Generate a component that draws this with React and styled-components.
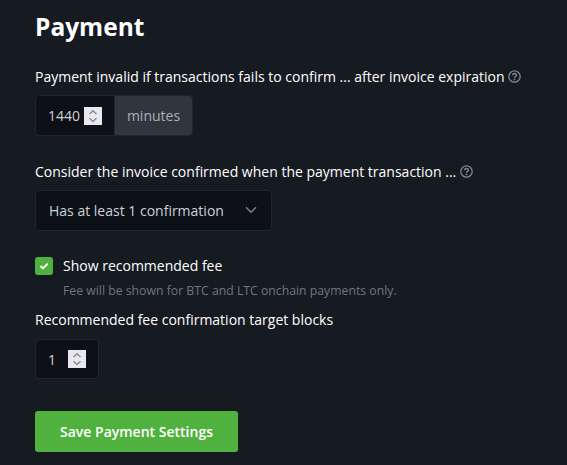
import React from "react";
import styled, { createGlobalStyle } from "styled-components";

const GlobalStyle = createGlobalStyle`
  *, *::before, *::after { box-sizing: border-box; }
  body {
    margin: 0;
    background: #161b22;
    color: #fff;
    font: 400 14px/21px "Open Sans", "Noto Sans", sans-serif;
  }
`;

const Page = styled.form`
  display: flex;
  flex-direction: column;
  align-items: flex-start;
  height: 465px;
  padding: 9px 35px 0;
  overflow: hidden;
  white-space: nowrap;
`;

const Title = styled.h3`
  margin: 0 0 21px;
  font-size: 24.5px;
  line-height: 36px;
  font-weight: 700;
`;

const LabelRow = styled.div`
  display: flex;
  align-items: center;
  height: 20px;
  margin-top: ${(p) => p.$top || 0}px;
  gap: 3.5px;
`;

const Label = styled.label`
  font-size: 14px;
`;

const HelpIcon = styled.svg`
  width: 13px;
  height: 13px;
  flex: none;
  fill: none;
  stroke: #7d848d;
`;

const InputGroup = styled.div`
  display: flex;
  height: ${(p) => p.$height}px;
  width: ${(p) => p.$width}px;
  margin-top: ${(p) => p.$top}px;
  border: 1px solid #21262d;
  border-radius: 4px;
  background: #0d1117;
  overflow: hidden;
`;

const NumberField = styled.div`
  display: flex;
  flex: 1;
  align-items: center;
  justify-content: space-between;
  padding: 0 12px;
  color: #c9d1d9;
`;

const Spinner = styled.svg`
  width: 18px;
  height: 18px;
  background: #e9e9ed;
  fill: none;
  stroke: #8b8b94;
  stroke-width: 1.5;
`;

const Unit = styled.span`
  display: flex;
  align-items: center;
  justify-content: center;
  width: 78px;
  border-left: 1px solid #21262d;
  background: #30363d;
  color: #a8b0b9;
`;

const Select = styled.button`
  display: flex;
  align-items: center;
  justify-content: space-between;
  width: 237px;
  height: 41px;
  margin: 9px 0 25px;
  padding: 0 14px 0 13px;
  border: 1px solid #21262d;
  border-radius: 4px;
  background: #0d1117;
  color: #c9d1d9;
  font: inherit;
`;

const Chevron = styled.svg`
  width: 12px;
  height: 8px;
  margin-bottom: 1px;
  fill: none;
  stroke: #7d848e;
  stroke-width: 1.4;
`;

const CheckRow = styled.div`
  display: flex;
  align-items: center;
  gap: 10px;
  height: 20px;

  label {
    padding-bottom: 2px;
  }
`;

const Checkbox = styled.span`
  display: flex;
  width: 18px;
  height: 18px;
  border-radius: 3px;
  background: #51b13e;
`;

const CheckMark = styled.svg`
  width: 18px;
  height: 18px;
  fill: none;
  stroke: #fff;
  stroke-width: 2;
`;

const Hint = styled.p`
  margin: 5px 0 8px 28px;
  color: #6e7681;
  font-size: 12.25px;
  line-height: 20px;
`;

const SaveButton = styled.button`
  width: 203px;
  height: 41px;
  margin-top: 32px;
  padding: 0;
  border: 0;
  border-radius: 3px;
  background: #51b13e;
  color: #fff;
  font: inherit;
  font-weight: 600;
`;

function Help() {
  return (
    <HelpIcon viewBox="0 0 13 13">
      <circle cx="6.5" cy="6.5" r="5.7" strokeWidth="1.3" />
      <path d="M4.6 5.2C4.6 2.8 8.4 2.9 8.4 5C8.4 6.4 6.5 6.2 6.5 7.8" strokeWidth="1.5" />
      <path d="M6.5 8.7V10.2" strokeWidth="1.6" />
    </HelpIcon>
  );
}

function Stepper() {
  return (
    <Spinner viewBox="0 0 18 18">
      <path d="M5.5 7L9 3.7L12.5 7M5.5 11.2L9 14.5L12.5 11.2" />
    </Spinner>
  );
}

export default function App() {
  return (
    <>
      <GlobalStyle />
      <Page>
        <Title>Payment</Title>
        <LabelRow>
          <Label>Payment invalid if transactions fails to confirm ... after invoice expiration</Label>
          <Help />
        </LabelRow>
        <InputGroup $width={158} $height={41} $top={9}>
          <NumberField>1440<Stepper /></NumberField>
          <Unit>minutes</Unit>
        </InputGroup>
        <LabelRow $top={25}>
          <Label>Consider the invoice confirmed when the payment transaction ...</Label>
          <Help />
        </LabelRow>
        <Select type="button">
          Has at least 1 confirmation
          <Chevron viewBox="0 0 12 8"><path d="M1 1.2L6 6.2L11 1.2" /></Chevron>
        </Select>
        <CheckRow>
          <Checkbox>
            <CheckMark viewBox="0 0 18 18"><path d="M5.5 9L8 11.4L12.7 6.6" /></CheckMark>
          </Checkbox>
          <Label>Show recommended fee</Label>
        </CheckRow>
        <Hint>Fee will be shown for BTC and LTC onchain payments only.</Hint>
        <LabelRow>
          <Label>Recommended fee confirmation target blocks</Label>
        </LabelRow>
        <InputGroup $width={64} $height={40} $top={10}>
          <NumberField>1<Stepper /></NumberField>
        </InputGroup>
        <SaveButton type="button">Save Payment Settings</SaveButton>
      </Page>
    </>
  );
}
